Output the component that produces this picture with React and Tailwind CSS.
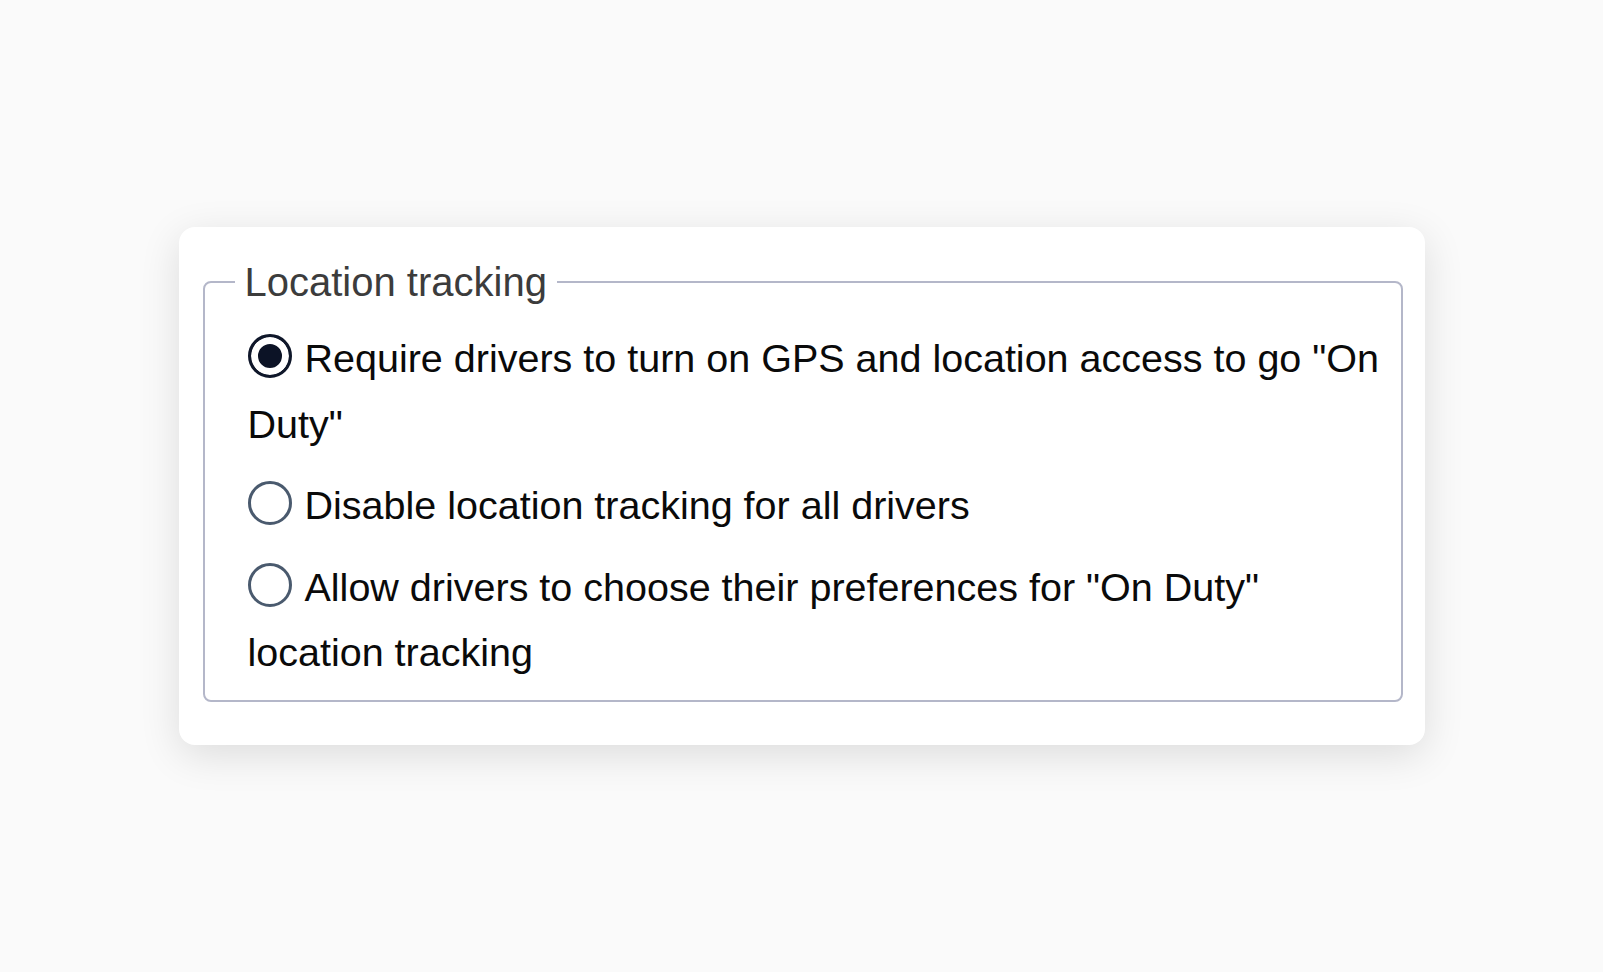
import { useState } from 'react'

const options = [
  { id: 'require', label: 'Require drivers to turn on GPS and location access to go "On Duty"' },
  { id: 'disable', label: 'Disable location tracking for all drivers' },
  { id: 'choose', label: 'Allow drivers to choose their preferences for "On Duty" location tracking' },
]

// Checked state is a filled disc with an inset white ring, so the span stays empty
// and its baseline is the same for every option.
function RadioDot({ checked }) {
  return (
    <span
      className={`inline-block w-[44px] h-[44px] mr-[13px] rounded-full border-[3px] align-[-6px] ${
        checked
          ? 'border-[#0f172a] bg-[#0c1326] shadow-[inset_0_0_0_7px_#ffffff]'
          : 'border-[#4a5a6e] bg-white'
      }`}
    />
  )
}

export default function App() {
  const [selected, setSelected] = useState('require')

  return (
    <div className="min-h-screen bg-[#fafafa] flex items-center justify-center font-['Liberation_Sans',Arial,sans-serif]">
      <div className="w-[1246px] bg-white rounded-[16px] pt-[32px] pl-[24px] pr-[22px] pb-[43px] shadow-[0_10px_40px_rgba(0,0,0,0.12)]">
        <fieldset className="border-2 border-[#b4b7c9] rounded-[8px] pl-[30px] pr-[16px] pt-[21px] pb-[14px] m-0">
          <legend className="px-[10px] text-[40px] leading-[1.15] text-[#3c3c3c]">Location tracking</legend>
          <div className="pl-[13px] flex flex-col gap-[16px]">
            {options.map((opt) => (
              <label
                key={opt.id}
                className="block text-[39.5px] leading-[65.5px] text-[#0a0a0a] cursor-pointer"
                onClick={() => setSelected(opt.id)}
              >
                <RadioDot checked={selected === opt.id} />
                {opt.label}
              </label>
            ))}
          </div>
        </fieldset>
      </div>
    </div>
  )
}
